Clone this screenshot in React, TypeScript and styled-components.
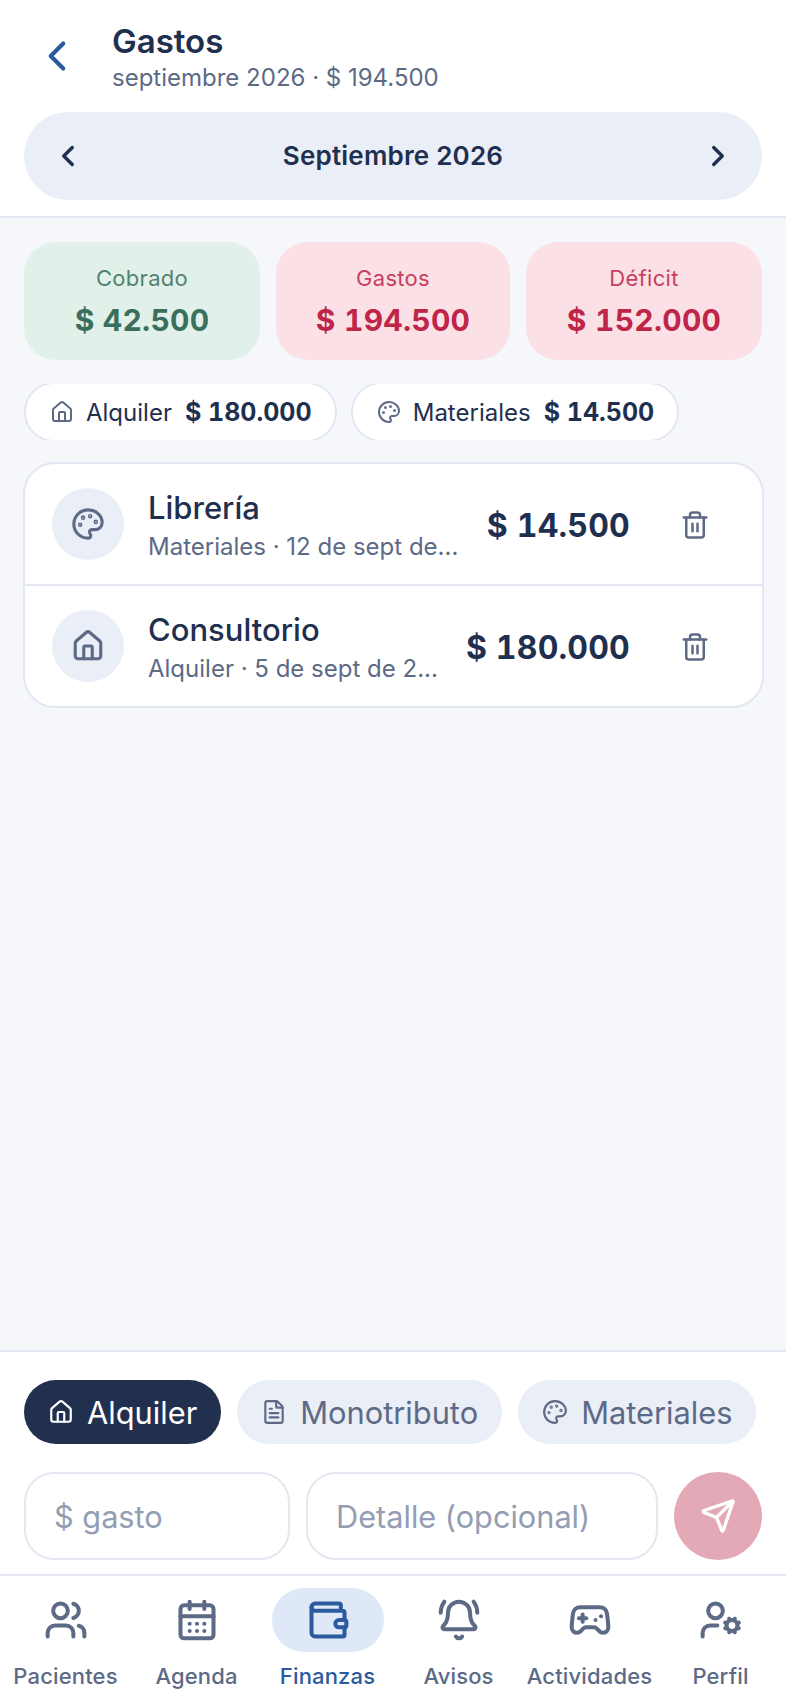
import React from "react";
import styled, { createGlobalStyle } from "styled-components";
import {
  BellRing,
  CalendarDays,
  ChevronLeft,
  ChevronRight,
  FileText,
  Gamepad2,
  House,
  Palette,
  Send,
  Trash2,
  UserCog,
  Users,
  Wallet,
} from "lucide-react";

const GlobalStyle = createGlobalStyle`
  html, body { margin: 0; padding: 0; background: #f5f7fb; }
  * { box-sizing: border-box; }
  body { font-family: Inter, "Noto Sans", sans-serif; color: #1f2f4f; }
`;

const Screen = styled.div`
  width: 786px;
  height: 1704px;
  display: flex;
  flex-direction: column;
  overflow: hidden;
`;

const Header = styled.header`
  background: #fff;
  border-bottom: 2px solid #e3e7f2;
  height: 218px;
  padding: 0 24px;
`;

const TitleRow = styled.div`
  height: 112px;
  display: flex;
  align-items: center;
  padding-left: 8px;
  color: #2b5a9e;
`;

const TitleBlock = styled.div`
  margin-left: 30px;
  margin-top: 2px;
`;

const Title = styled.div`
  font-size: 33px;
  line-height: 40px;
  font-weight: 600;
  color: #1f2f4f;
`;

const Subtitle = styled.div`
  font-size: 24px;
  line-height: 32px;
  margin-top: 1px;
  color: #5d6a86;
`;

const MonthPill = styled.div`
  height: 88px;
  border-radius: 44px;
  background: #eaeef6;
  display: flex;
  align-items: center;
  justify-content: space-between;
  padding: 0 27px;
`;

const MonthLabel = styled.span`
  font-size: 26px;
  font-weight: 600;
  letter-spacing: 0.2px;
  margin-top: -2px;
`;

const Content = styled.main`
  flex: 1;
  padding: 24px 24px 0;
`;

const Summary = styled.div`
  display: grid;
  grid-template-columns: 236px 234px 236px;
  gap: 16px;
`;

const SummaryCard = styled.div<{ $tone: "good" | "bad" }>`
  height: 118px;
  border-radius: 32px;
  background: ${(p) => (p.$tone === "good" ? "#e1f0e8" : "#fbe1e6")};
  display: flex;
  flex-direction: column;
  align-items: center;
  justify-content: center;
  gap: 10px;
  color: ${(p) => (p.$tone === "good" ? "#3a6f5e" : "#be2549")};
`;

const SummaryLabel = styled.div`
  font-size: 22px;
  line-height: 28px;
  letter-spacing: 0.3px;
  opacity: 0.85;
`;

const SummaryValue = styled.div`
  font-size: 30px;
  line-height: 36px;
  font-weight: 700;
  letter-spacing: 0.25px;
  font-variant-numeric: tabular-nums;
`;

const ChipRow = styled.div`
  display: flex;
  align-items: center;
  gap: 14px;
  height: 56px;
  margin-top: 24px;
  overflow: hidden;
`;

const TotalChip = styled.div`
  height: 60px;
  padding: 0 23px 0 24px;
  border-radius: 30px;
  background: #fff;
  border: 2px solid #e3e7f2;
  display: flex;
  align-items: center;
  font-size: 24px;
  flex-shrink: 0;
`;

const ChipIcon = styled.span`
  display: flex;
  color: #5d6a86;
  margin-right: 12px;
`;

const ChipAmount = styled.b`
  font-size: 25px;
  font-weight: 700;
  margin-left: 13px;
  font-variant-numeric: tabular-nums;
`;

const List = styled.section`
  margin-top: 22px;
  margin-left: -1px;
  width: 741px;
  background: #fff;
  border: 2px solid #e3e7f2;
  border-radius: 32px;
`;

const Row = styled.div`
  height: 120px;
  display: flex;
  align-items: center;
  padding: 2px 52px 0 27px;
  & + & {
    height: 122px;
    border-top: 2px solid #e3e7f2;
  }
`;

const RowIcon = styled.div`
  width: 72px;
  height: 72px;
  margin-top: -2px;
  border-radius: 50%;
  background: #eaeef6;
  color: #5d6a86;
  display: flex;
  align-items: center;
  justify-content: center;
  flex-shrink: 0;
`;

const RowText = styled.div`
  flex: 1;
  margin-left: 24px;
  min-width: 0;
`;

const RowTitle = styled.div`
  font-size: 31px;
  line-height: 38px;
  font-weight: 500;
`;

const RowSub = styled.div`
  font-size: 24px;
  line-height: 30px;
  margin-top: 5px;
  color: #5d6a86;
`;

const RowAmount = styled.div`
  font-size: 32px;
  font-weight: 700;
  letter-spacing: 0.2px;
  font-variant-numeric: tabular-nums;
  margin-right: 50px;
`;

const TrashButton = styled.div`
  display: flex;
  color: #5d6a86;
`;

const Composer = styled.div`
  height: 224px;
  background: #fff;
  border-top: 2px solid #e3e7f2;
  padding: 28px 24px 0;
`;

const CategoryRow = styled.div`
  display: flex;
  gap: 16px;
`;

const CategoryChip = styled.div<{ $active?: boolean }>`
  height: 64px;
  padding: 0 24px;
  border-radius: 32px;
  display: flex;
  align-items: center;
  gap: 13px;
  font-size: 30.8px;
  background: ${(p) => (p.$active ? "#22304f" : "#eaeef6")};
  color: ${(p) => (p.$active ? "#fff" : "#5d6a86")};
`;

const InputRow = styled.div`
  display: flex;
  gap: 16px;
  margin-top: 28px;
`;

const Field = styled.input<{ $width: number }>`
  width: ${(p) => p.$width}px;
  height: 88px;
  border: 2px solid #e3e7f2;
  border-radius: 30px;
  padding: 0 28px;
  font-family: inherit;
  font-size: 30.7px;
  outline: none;
  &::placeholder {
    color: #939db3;
  }
`;

const SendButton = styled.div`
  width: 88px;
  height: 88px;
  border-radius: 50%;
  background: #e4a9b7;
  color: #fff;
  display: flex;
  align-items: center;
  justify-content: center;
`;

const Nav = styled.nav`
  height: 130px;
  background: #fff;
  border-top: 2px solid #e3e7f2;
  display: grid;
  grid-template-columns: repeat(6, 131px);
  padding-top: 12px;
`;

const NavItem = styled.div<{ $active?: boolean }>`
  display: flex;
  flex-direction: column;
  align-items: center;
  color: ${(p) => (p.$active ? "#2b5a9e" : "#5d6a86")};
`;

const NavIcon = styled.div<{ $active?: boolean }>`
  width: 112px;
  height: 64px;
  border-radius: 32px;
  background: ${(p) => (p.$active ? "#dfe8f7" : "transparent")};
  display: flex;
  align-items: center;
  justify-content: center;
`;

const NavLabel = styled.div`
  font-size: 22px;
  line-height: 28px;
  margin-top: 10px;
  font-weight: 500;
  letter-spacing: 0.15px;
`;

const navItems = [
  { label: "Pacientes", Icon: Users },
  { label: "Agenda", Icon: CalendarDays },
  { label: "Finanzas", Icon: Wallet, active: true },
  { label: "Avisos", Icon: BellRing },
  { label: "Actividades", Icon: Gamepad2 },
  { label: "Perfil", Icon: UserCog },
];

export default function App() {
  return (
    <Screen>
      <GlobalStyle />
      <Header>
        <TitleRow>
          <ChevronLeft size={50} strokeWidth={2} />
          <TitleBlock>
            <Title>Gastos</Title>
            <Subtitle>septiembre 2026 · $ 194.500</Subtitle>
          </TitleBlock>
        </TitleRow>
        <MonthPill>
          <ChevronLeft size={34} strokeWidth={2.4} />
          <MonthLabel>Septiembre 2026</MonthLabel>
          <ChevronRight size={34} strokeWidth={2.4} />
        </MonthPill>
      </Header>
      <Content>
        <Summary>
          <SummaryCard $tone="good">
            <SummaryLabel>Cobrado</SummaryLabel>
            <SummaryValue>$ 42.500</SummaryValue>
          </SummaryCard>
          <SummaryCard $tone="bad">
            <SummaryLabel>Gastos</SummaryLabel>
            <SummaryValue>$ 194.500</SummaryValue>
          </SummaryCard>
          <SummaryCard $tone="bad">
            <SummaryLabel>Déficit</SummaryLabel>
            <SummaryValue>$ 152.000</SummaryValue>
          </SummaryCard>
        </Summary>
        <ChipRow>
          <TotalChip>
            <ChipIcon><House size={24} strokeWidth={2} /></ChipIcon>
            Alquiler
            <ChipAmount>$ 180.000</ChipAmount>
          </TotalChip>
          <TotalChip>
            <ChipIcon><Palette size={24} strokeWidth={2} /></ChipIcon>
            Materiales
            <ChipAmount>$ 14.500</ChipAmount>
          </TotalChip>
        </ChipRow>
        <List>
          <Row>
            <RowIcon><Palette size={34} strokeWidth={2.2} /></RowIcon>
            <RowText>
              <RowTitle>Librería</RowTitle>
              <RowSub>Materiales · 12 de sept de...</RowSub>
            </RowText>
            <RowAmount>$ 14.500</RowAmount>
            <TrashButton><Trash2 size={30} strokeWidth={2} /></TrashButton>
          </Row>
          <Row>
            <RowIcon><House size={34} strokeWidth={2.2} /></RowIcon>
            <RowText>
              <RowTitle>Consultorio</RowTitle>
              <RowSub>Alquiler · 5 de sept de 2...</RowSub>
            </RowText>
            <RowAmount>$ 180.000</RowAmount>
            <TrashButton><Trash2 size={30} strokeWidth={2} /></TrashButton>
          </Row>
        </List>
      </Content>
      <Composer>
        <CategoryRow>
          <CategoryChip $active><House size={26} strokeWidth={2} />Alquiler</CategoryChip>
          <CategoryChip><FileText size={26} strokeWidth={2} />Monotributo</CategoryChip>
          <CategoryChip><Palette size={26} strokeWidth={2} />Materiales</CategoryChip>
        </CategoryRow>
        <InputRow>
          <Field $width={266} placeholder="$ gasto" />
          <Field $width={352} placeholder="Detalle (opcional)" />
          <SendButton><Send size={36} strokeWidth={2.2} /></SendButton>
        </InputRow>
      </Composer>
      <Nav>
        {navItems.map(({ label, Icon, active }) => (
          <NavItem key={label} $active={active}>
            <NavIcon $active={active}><Icon size={44} strokeWidth={2.2} /></NavIcon>
            <NavLabel>{label}</NavLabel>
          </NavItem>
        ))}
      </Nav>
    </Screen>
  );
}
